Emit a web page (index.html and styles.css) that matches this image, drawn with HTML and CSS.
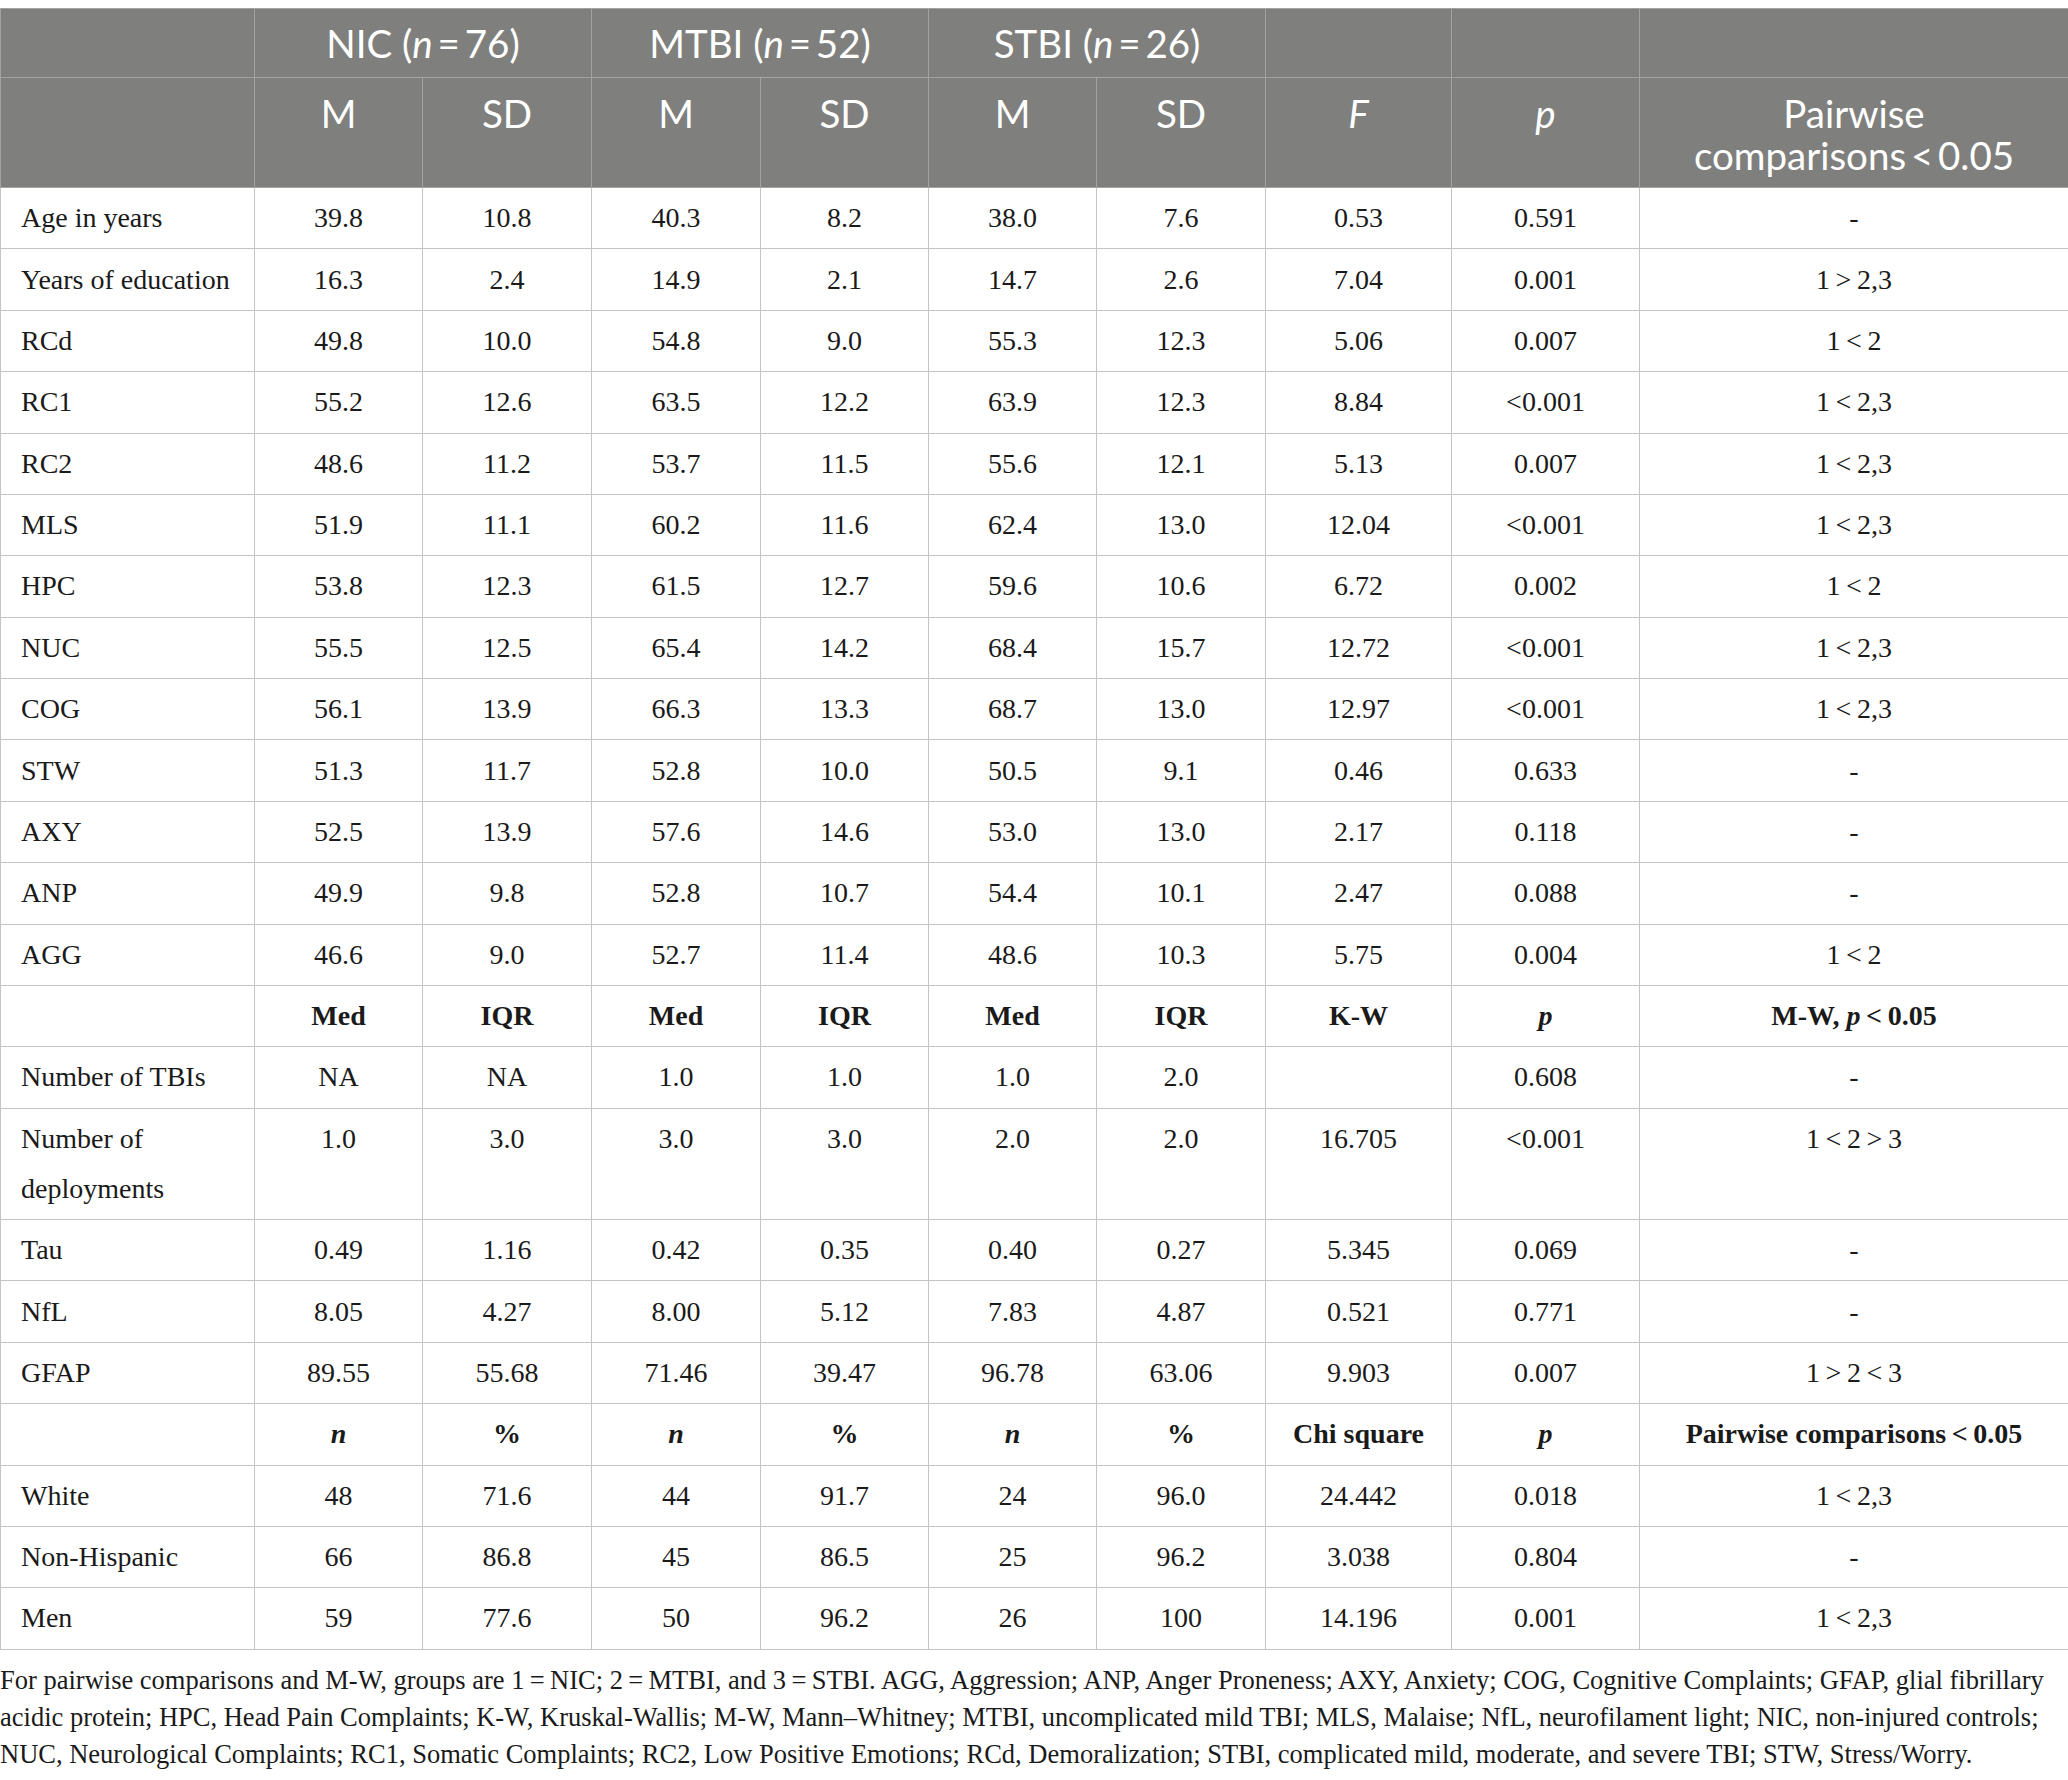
FILE: index.html
```html
<!DOCTYPE html>
<html>
<head>
<meta charset="utf-8">
<link rel="stylesheet" href="styles.css">
</head>
<body>
<table class="stats">
  <colgroup>
    <col class="c-label"><col class="c-a"><col class="c-b"><col class="c-b"><col class="c-a"><col class="c-a"><col class="c-b"><col class="c-f"><col class="c-p"><col class="c-pw">
  </colgroup>
  <thead>
    <tr class="h1">
      <th></th>
      <th colspan="2">NIC (<i>n</i>&thinsp;=&thinsp;76)</th>
      <th colspan="2">MTBI (<i>n</i>&thinsp;=&thinsp;52)</th>
      <th colspan="2">STBI (<i>n</i>&thinsp;=&thinsp;26)</th>
      <th></th>
      <th></th>
      <th></th>
    </tr>
    <tr class="h2">
      <th></th>
      <th>M</th><th>SD</th><th>M</th><th>SD</th><th>M</th><th>SD</th>
      <th><i>F</i></th>
      <th><i>p</i></th>
      <th>Pairwise<br>comparisons&thinsp;&lt;&thinsp;0.05</th>
    </tr>
  </thead>
  <tbody>
    <tr><td>Age in years</td><td>39.8</td><td>10.8</td><td>40.3</td><td>8.2</td><td>38.0</td><td>7.6</td><td>0.53</td><td>0.591</td><td>-</td></tr>
    <tr><td>Years of education</td><td>16.3</td><td>2.4</td><td>14.9</td><td>2.1</td><td>14.7</td><td>2.6</td><td>7.04</td><td>0.001</td><td>1&thinsp;&gt;&thinsp;2,3</td></tr>
    <tr><td>RCd</td><td>49.8</td><td>10.0</td><td>54.8</td><td>9.0</td><td>55.3</td><td>12.3</td><td>5.06</td><td>0.007</td><td>1&thinsp;&lt;&thinsp;2</td></tr>
    <tr><td>RC1</td><td>55.2</td><td>12.6</td><td>63.5</td><td>12.2</td><td>63.9</td><td>12.3</td><td>8.84</td><td>&lt;0.001</td><td>1&thinsp;&lt;&thinsp;2,3</td></tr>
    <tr><td>RC2</td><td>48.6</td><td>11.2</td><td>53.7</td><td>11.5</td><td>55.6</td><td>12.1</td><td>5.13</td><td>0.007</td><td>1&thinsp;&lt;&thinsp;2,3</td></tr>
    <tr><td>MLS</td><td>51.9</td><td>11.1</td><td>60.2</td><td>11.6</td><td>62.4</td><td>13.0</td><td>12.04</td><td>&lt;0.001</td><td>1&thinsp;&lt;&thinsp;2,3</td></tr>
    <tr><td>HPC</td><td>53.8</td><td>12.3</td><td>61.5</td><td>12.7</td><td>59.6</td><td>10.6</td><td>6.72</td><td>0.002</td><td>1&thinsp;&lt;&thinsp;2</td></tr>
    <tr><td>NUC</td><td>55.5</td><td>12.5</td><td>65.4</td><td>14.2</td><td>68.4</td><td>15.7</td><td>12.72</td><td>&lt;0.001</td><td>1&thinsp;&lt;&thinsp;2,3</td></tr>
    <tr><td>COG</td><td>56.1</td><td>13.9</td><td>66.3</td><td>13.3</td><td>68.7</td><td>13.0</td><td>12.97</td><td>&lt;0.001</td><td>1&thinsp;&lt;&thinsp;2,3</td></tr>
    <tr><td>STW</td><td>51.3</td><td>11.7</td><td>52.8</td><td>10.0</td><td>50.5</td><td>9.1</td><td>0.46</td><td>0.633</td><td>-</td></tr>
    <tr><td>AXY</td><td>52.5</td><td>13.9</td><td>57.6</td><td>14.6</td><td>53.0</td><td>13.0</td><td>2.17</td><td>0.118</td><td>-</td></tr>
    <tr><td>ANP</td><td>49.9</td><td>9.8</td><td>52.8</td><td>10.7</td><td>54.4</td><td>10.1</td><td>2.47</td><td>0.088</td><td>-</td></tr>
    <tr><td>AGG</td><td>46.6</td><td>9.0</td><td>52.7</td><td>11.4</td><td>48.6</td><td>10.3</td><td>5.75</td><td>0.004</td><td>1&thinsp;&lt;&thinsp;2</td></tr>
    <tr class="sub"><td></td><td>Med</td><td>IQR</td><td>Med</td><td>IQR</td><td>Med</td><td>IQR</td><td>K-W</td><td><i>p</i></td><td>M-W, <i>p</i>&thinsp;&lt;&thinsp;0.05</td></tr>
    <tr><td>Number of TBIs</td><td>NA</td><td>NA</td><td>1.0</td><td>1.0</td><td>1.0</td><td>2.0</td><td></td><td>0.608</td><td>-</td></tr>
    <tr><td>Number of deployments</td><td>1.0</td><td>3.0</td><td>3.0</td><td>3.0</td><td>2.0</td><td>2.0</td><td>16.705</td><td>&lt;0.001</td><td>1&thinsp;&lt;&thinsp;2&thinsp;&gt;&thinsp;3</td></tr>
    <tr><td>Tau</td><td>0.49</td><td>1.16</td><td>0.42</td><td>0.35</td><td>0.40</td><td>0.27</td><td>5.345</td><td>0.069</td><td>-</td></tr>
    <tr><td>NfL</td><td>8.05</td><td>4.27</td><td>8.00</td><td>5.12</td><td>7.83</td><td>4.87</td><td>0.521</td><td>0.771</td><td>-</td></tr>
    <tr><td>GFAP</td><td>89.55</td><td>55.68</td><td>71.46</td><td>39.47</td><td>96.78</td><td>63.06</td><td>9.903</td><td>0.007</td><td>1&thinsp;&gt;&thinsp;2&thinsp;&lt;&thinsp;3</td></tr>
    <tr class="sub"><td></td><td><i>n</i></td><td>%</td><td><i>n</i></td><td>%</td><td><i>n</i></td><td>%</td><td>Chi square</td><td><i>p</i></td><td>Pairwise comparisons&thinsp;&lt;&thinsp;0.05</td></tr>
    <tr><td>White</td><td>48</td><td>71.6</td><td>44</td><td>91.7</td><td>24</td><td>96.0</td><td>24.442</td><td>0.018</td><td>1&thinsp;&lt;&thinsp;2,3</td></tr>
    <tr><td>Non-Hispanic</td><td>66</td><td>86.8</td><td>45</td><td>86.5</td><td>25</td><td>96.2</td><td>3.038</td><td>0.804</td><td>-</td></tr>
    <tr><td>Men</td><td>59</td><td>77.6</td><td>50</td><td>96.2</td><td>26</td><td>100</td><td>14.196</td><td>0.001</td><td>1&thinsp;&lt;&thinsp;2,3</td></tr>
  </tbody>
</table>
<p class="note">For pairwise comparisons and M-W, groups are 1&thinsp;=&thinsp;NIC; 2&thinsp;=&thinsp;MTBI, and 3&thinsp;=&thinsp;STBI. AGG, Aggression; ANP, Anger Proneness; AXY, Anxiety; COG, Cognitive Complaints; GFAP, glial fibrillary<br>acidic protein; HPC, Head Pain Complaints; K-W, Kruskal-Wallis; M-W, Mann–Whitney; MTBI, uncomplicated mild TBI; MLS, Malaise; NfL, neurofilament light; NIC, non-injured controls;<br>NUC, Neurological Complaints; RC1, Somatic Complaints; RC2, Low Positive Emotions; RCd, Demoralization; STBI, complicated mild, moderate, and severe TBI; STW, Stress/Worry.</p>
</body>
</html>
```
FILE: styles.css
```css
html, body {
  margin: 0;
  padding: 0;
  background: #ffffff;
}
body {
  padding-top: 8px;
  font-family: "Liberation Serif", "Times New Roman", serif;
  color: #1a1a1a;
}
.stats {
  width: 2068px;
  border-collapse: collapse;
  table-layout: fixed;
  font-size: 28px;
}
.c-label { width: 254px; }
.c-a { width: 168px; }
.c-b { width: 169px; }
.c-f { width: 186px; }
.c-p { width: 188px; }
.c-pw { width: 429px; }

.stats th {
  background: #7f807e;
  color: #ffffff;
  font-family: Lato, "Open Sans", sans-serif;
  font-weight: 400;
  font-size: 38.5px;
  line-height: 42px;
  border: 1px solid #a3a4a2;
  text-align: center;
  vertical-align: top;
}
.stats th i { font-style: italic; }
.h1 th {
  padding: 13px 4px 13px;
}
.h2 th {
  padding: 14px 4px 11px;
}
.stats td {
  border: 1px solid #c4c4c4;
  line-height: 50px;
  padding: 5.2px 8px;
  text-align: center;
  vertical-align: top;
}
.stats td:first-child {
  text-align: left;
  padding-left: 20px;
}
.sub td { font-weight: 700; }

.note {
  margin: 12px 0 0 0;
  font-size: 26.5px;
  line-height: 37px;
  color: #1a1a1a;
  white-space: nowrap;
}
```
